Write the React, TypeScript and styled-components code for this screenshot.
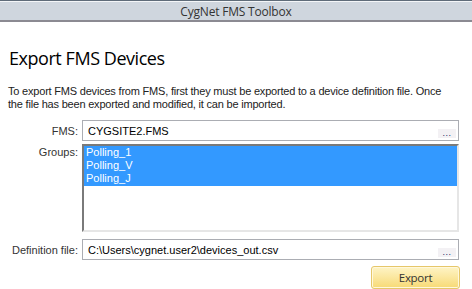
import React from "react";
import styled, { createGlobalStyle } from "styled-components";

const Global = createGlobalStyle`
  html, body { margin: 0; padding: 0; background: #ffffff; }
  body { font-family: "Liberation Sans", Arial, sans-serif; }
`;

const Window = styled.div`
  width: 472px;
  height: 289px;
  background: #ffffff;
  display: flex;
  flex-direction: column;
  overflow: hidden;
`;

const TitleBar = styled.div`
  height: 29px;
  border-top: 1px solid #5f6c79;
  border-bottom: 2px solid #8b8a92;
  background: #cfd6de;
  box-shadow: inset 0 1px 0 #f4f6f8;
  display: flex;
  align-items: center;
  justify-content: center;
  font-family: "Open Sans", "Noto Sans", sans-serif;
  font-size: 12px;
  letter-spacing: -0.2px;
  color: #333333;
  padding-top: 2px;
  box-sizing: content-box;
`;

const Body = styled.div`
  padding: 0 13px 0 8px;
  display: flex;
  flex-direction: column;
`;

const Heading = styled.h1`
  margin: 24px 0 0 1px;
  font-family: "Open Sans", "Noto Sans", sans-serif;
  font-weight: 400;
  font-size: 18px;
  line-height: 24px;
  letter-spacing: -0.45px;
  color: #000000;
`;

const Intro = styled.p`
  margin: 15px 0 0 0;
  font-size: 11px;
  line-height: 13px;
  letter-spacing: -0.2px;
  white-space: nowrap;
  color: #222222;
`;

const Form = styled.div`
  margin-top: 9px;
  display: grid;
  grid-template-columns: 70px 1fr;
  column-gap: 4px;
  align-items: center;
`;

const Label = styled.div<{ $top?: boolean; $mt?: number }>`
  font-size: 11px;
  color: #333333;
  text-align: right;
  align-self: ${(p) => (p.$top ? "start" : "center")};
  padding-top: ${(p) => (p.$top ? "5px" : "0")};
  margin-top: ${(p) => p.$mt ?? 0}px;
  white-space: nowrap;
`;

const Field = styled.div<{ $mt?: number }>`
  margin-top: ${(p) => p.$mt ?? 0}px;
  height: 19px;
  border: 1px solid #abadb3;
  display: flex;
  align-items: center;
  padding-left: 5px;
  padding-right: 2px;
  font-size: 11px;
  color: #000000;
`;

const FieldText = styled.span`
  flex: 1;
`;

const Ellipsis = styled.div`
  width: 18px;
  height: 9px;
  margin-top: 6px;
  background: #f3f1f4;
  display: flex;
  align-items: flex-end;
  justify-content: center;
  font-size: 9px;
  line-height: 9px;
  color: #2a2a6a;
  letter-spacing: 0.5px;
`;

const ListBox = styled.div`
  margin-top: 3px;
  height: 84px;
  border-top: 2px solid #7a7a7a;
  border-left: 2px solid #7a7a7a;
  border-right: 2px solid #e6e6e6;
  border-bottom: 2px solid #e6e6e6;
  display: flex;
  flex-direction: column;
`;

const ListItem = styled.div<{ $selected?: boolean }>`
  height: 13px;
  line-height: 13px;
  padding-left: 2px;
  font-size: 11px;
  background: ${(p) => (p.$selected ? "#3399ff" : "transparent")};
  color: ${(p) => (p.$selected ? "#ffffff" : "#000000")};
  &:last-child { height: 14px; }
`;

const Actions = styled.div`
  display: flex;
  justify-content: flex-end;
  margin-top: 6px;
`;

const Button = styled.button`
  width: 89px;
  height: 23px;
  border: 1px solid #e6c76a;
  border-radius: 3px;
  background: linear-gradient(#fef4c6 0%, #fbe79e 50%, #f7da75 100%);
  box-shadow: inset 0 0 0 1px #fff8dc;
  font-family: "Open Sans", "Noto Sans", sans-serif;
  font-size: 11.5px;
  letter-spacing: -0.3px;
  color: #333333;
  padding: 0;
  margin-right: -1px;
`;

export default function App() {
  return (
    <Window>
      <Global />
      <TitleBar>CygNet FMS Toolbox</TitleBar>
      <Body>
        <Heading>Export FMS Devices</Heading>
        <Intro>
          To export FMS devices from FMS, first they must be exported to a device definition file. Once
          <br />
          the file has been exported and modified, it can be imported.
        </Intro>
        <Form>
          <Label>FMS:</Label>
          <Field>
            <FieldText>CYGSITE2.FMS</FieldText>
            <Ellipsis>...</Ellipsis>
          </Field>
          <Label $top>Groups:</Label>
          <ListBox>
            <ListItem $selected>Polling_1</ListItem>
            <ListItem $selected>Polling_V</ListItem>
            <ListItem $selected>Polling_J</ListItem>
          </ListBox>
          <Label $mt={7}>Definition file:</Label>
          <Field $mt={7}>
            <FieldText>C:\Users\cygnet.user2\devices_out.csv</FieldText>
            <Ellipsis>...</Ellipsis>
          </Field>
        </Form>
        <Actions>
          <Button>Export</Button>
        </Actions>
      </Body>
    </Window>
  );
}
